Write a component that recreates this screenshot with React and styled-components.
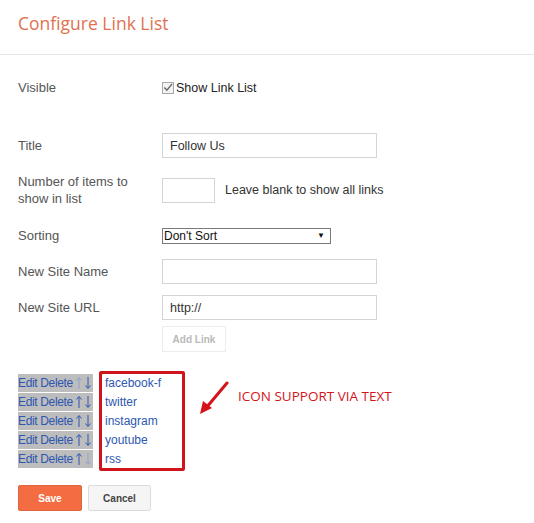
import React from "react";
import styled, { createGlobalStyle } from "styled-components";

const Global = createGlobalStyle`
  html, body { margin: 0; padding: 0; background: #fff; }
  body { font-family: "Liberation Sans", Arial, sans-serif; font-size: 13px; color: #555; }
`;

const Page = styled.div`
  width: 534px;
  height: 523px;
  overflow: hidden;
  background: #fff;
`;

const Header = styled.div`
  height: 55px;
  border-bottom: 1px solid #e5e5e5;
  padding-left: 18px;
  display: flex;
  align-items: center;
  box-sizing: border-box;
  padding-bottom: 8px;
`;

const Heading = styled.h1`
  margin: 0;
  font-family: "Open Sans", sans-serif;
  font-weight: 400;
  font-size: 17.5px;
  color: #e0714f;
`;

const Body = styled.div`
  padding: 0 18px;
`;

const Row = styled.div`
  display: grid;
  grid-template-columns: 144px 1fr;
  align-items: center;
  height: ${(p) => p.$h || 25}px;
  margin-top: ${(p) => p.$mt || 0}px;
`;

const Label = styled.div`
  font-size: 13px;
  line-height: 17px;
  color: #555;
`;

const Field = styled.div`
  display: flex;
  align-items: center;
  gap: 10px;
`;

const TextInput = styled.div`
  box-sizing: border-box;
  width: ${(p) => p.$w || 215}px;
  height: 25px;
  border: 1px solid #d4d4d4;
  padding: 0 7px;
  display: flex;
  align-items: center;
  font-size: 12.5px;
  color: #333;
`;

const Hint = styled.span`
  font-size: 12.5px;
  color: #333;
`;

const CheckWrap = styled.label`
  display: flex;
  align-items: center;
  gap: 2px;
  font-size: 12.5px;
  color: #222;
`;

const CheckBox = styled.span`
  width: 12px;
  height: 12px;
  box-sizing: border-box;
  border: 1px solid #a8a8a8;
  background: #f3f3f3;
  display: inline-flex;
  align-items: center;
  justify-content: center;
`;

const Select = styled.div`
  box-sizing: border-box;
  width: 169px;
  height: 16px;
  border: 1px solid #7a7a7a;
  display: flex;
  align-items: center;
  justify-content: space-between;
  padding: 0 5px 0 1px;
  font-size: 12px;
  color: #111;
`;

const Caret = styled.span`
  font-size: 8px;
  color: #111;
`;

const GhostButton = styled.div`
  box-sizing: border-box;
  width: 64px;
  height: 26px;
  border: 1px solid #ececec;
  display: flex;
  align-items: center;
  justify-content: center;
  font-size: 10px;
  font-weight: bold;
  color: #b9b9b9;
`;

const ListArea = styled.div`
  display: flex;
  align-items: flex-start;
  margin-top: 19px;
`;

const Controls = styled.div`
  display: flex;
  flex-direction: column;
  padding-top: 3px;
  width: 81px;
  flex: none;
`;

const ControlRow = styled.div`
  height: 18px;
  margin-bottom: 1px;
  width: 75px;
  background: #bdbdbd;
  display: flex;
  align-items: center;
  font-size: 12px;
  letter-spacing: -0.35px;
  color: #2d57b0;
  white-space: nowrap;
  overflow: hidden;
`;

const ArrowIcon = styled.svg`
  margin-left: ${(p) => p.$ml || 0}px;
  flex: none;
`;

const LinkBox = styled.div`
  box-sizing: border-box;
  width: 86px;
  height: 100px;
  border: 3px solid #d0141c;
  border-radius: 2px;
  padding: 0 0 0 3px;
  display: flex;
  flex-direction: column;
  flex: none;
`;

const LinkItem = styled.div`
  height: 19px;
  display: flex;
  align-items: center;
  font-size: 12px;
  color: #2d57b0;
`;

const Note = styled.div`
  display: flex;
  align-items: flex-start;
  margin-left: 14px;
  margin-top: 10px;
`;

const NoteText = styled.span`
  font-family: "Open Sans", sans-serif;
  font-size: 13.5px;
  color: #d4141a;
  margin-left: 7px;
  margin-top: 6px;
`;

const Actions = styled.div`
  display: flex;
  gap: 6px;
  margin-top: 14px;
`;

const Button = styled.div`
  box-sizing: border-box;
  width: ${(p) => p.$w}px;
  height: 26px;
  border-radius: 2px;
  display: flex;
  align-items: center;
  justify-content: center;
  font-size: 10px;
  font-weight: bold;
  background: ${(p) => (p.$primary ? "#f36c42" : "#f5f5f5")};
  border: 1px solid ${(p) => (p.$primary ? "#e0643c" : "#dcdcdc")};
  color: ${(p) => (p.$primary ? "#fff" : "#444")};
`;

const links = ["facebook-f", "twitter", "instagram", "youtube", "rss"];

function Arrow({ up, dim, ml }) {
  const c = dim ? "#8fa3cb" : "#2d57b0";
  return (
    <ArrowIcon $ml={ml} width="6" height="14" viewBox="0 0 6 14">
      {up ? (
        <>
          <path d="M3 2 V13" stroke={c} strokeWidth="1" />
          <path d="M0.5 4.5 L3 1.5 L5.5 4.5" fill="none" stroke={c} strokeWidth="1" />
        </>
      ) : (
        <>
          <path d="M3 1 V12" stroke={c} strokeWidth="1" />
          <path d="M0.5 9.5 L3 12.5 L5.5 9.5" fill="none" stroke={c} strokeWidth="1" />
        </>
      )}
    </ArrowIcon>
  );
}

export default function App() {
  return (
    <Page>
      <Global />
      <Header>
        <Heading>Configure Link List</Heading>
      </Header>
      <Body>
        <Row $mt={20}>
          <Label>Visible</Label>
          <CheckWrap>
            <CheckBox>
              <svg width="11" height="11" viewBox="0 0 11 11">
                <path d="M1.5 5.5 L4.3 8.5 L10 1.5" fill="none" stroke="#666" strokeWidth="1.6" />
              </svg>
            </CheckBox>
            Show Link List
          </CheckWrap>
        </Row>
        <Row $mt={33}>
          <Label>Title</Label>
          <TextInput>Follow Us</TextInput>
        </Row>
        <Row $mt={15} $h={34}>
          <Label>
            Number of items to
            <br />
            show in list
          </Label>
          <Field>
            <TextInput $w={53} />
            <Hint>Leave blank to show all links</Hint>
          </Field>
        </Row>
        <Row $mt={16}>
          <Label>Sorting</Label>
          <Select>
            <span>Don't Sort</span>
            <Caret>▼</Caret>
          </Select>
        </Row>
        <Row $mt={11}>
          <Label>New Site Name</Label>
          <TextInput />
        </Row>
        <Row $mt={11}>
          <Label>New Site URL</Label>
          <TextInput>http://</TextInput>
        </Row>
        <Row $mt={6} $h={26}>
          <span />
          <GhostButton>Add Link</GhostButton>
        </Row>
        <ListArea>
          <Controls>
            {links.map((l, i) => (
              <ControlRow key={l}>
                Edit Delete
                <Arrow up ml={3} dim={i === 0} />
                <Arrow ml={3} dim={i === links.length - 1} />
              </ControlRow>
            ))}
          </Controls>
          <LinkBox>
            {links.map((l) => (
              <LinkItem key={l}>{l}</LinkItem>
            ))}
          </LinkBox>
          <Note>
            <svg width="32" height="34" viewBox="0 0 32 34">
              <path d="M28 2 L7 27" stroke="#d4141a" strokeWidth="3" strokeLinecap="round" />
              <path d="M1 33 L4 20 L13 27 Z" fill="#d4141a" />
            </svg>
            <NoteText>ICON SUPPORT VIA TEXT</NoteText>
          </Note>
        </ListArea>
        <Actions>
          <Button $primary $w={64}>Save</Button>
          <Button $w={63}>Cancel</Button>
        </Actions>
      </Body>
    </Page>
  );
}
